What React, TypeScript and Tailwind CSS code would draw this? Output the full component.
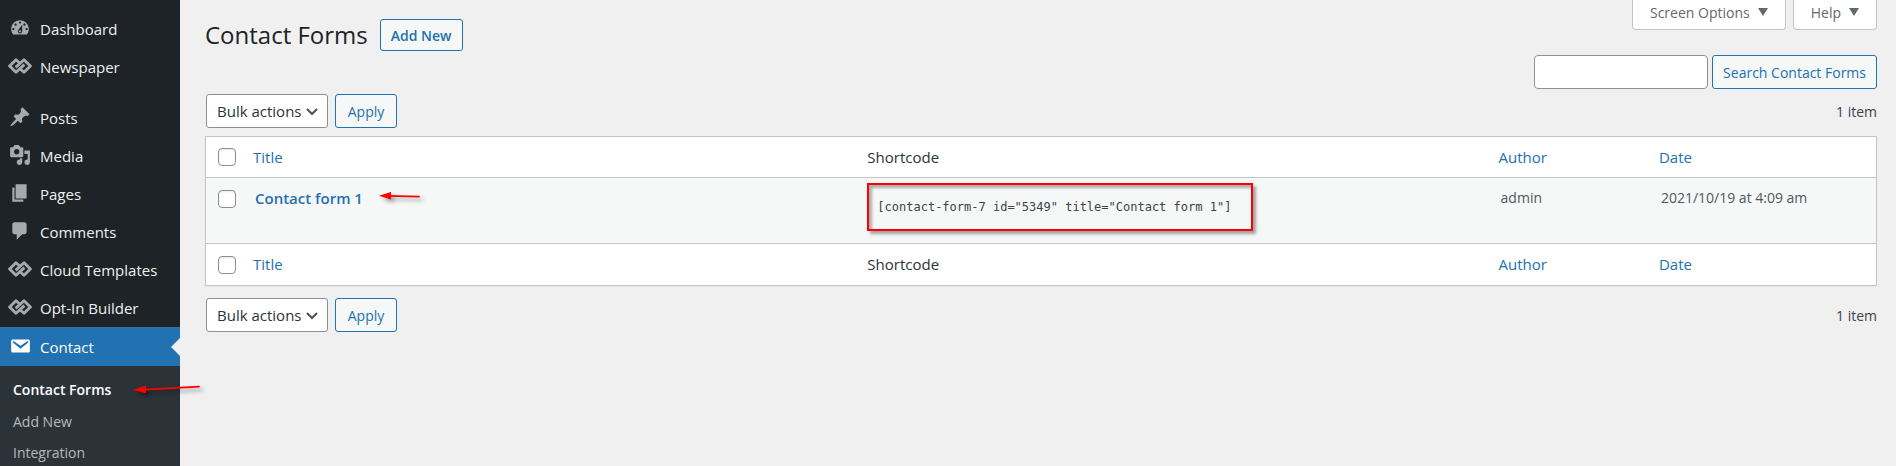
import React from "react";

const icons = {
  dashboard:
    "M3.76 16h12.48c1.1-1.37 1.76-3.11 1.76-5 0-4.42-3.58-8-8-8s-8 3.58-8 8c0 1.89.66 3.63 1.76 5zM10 4c.55 0 1 .45 1 1s-.45 1-1 1-1-.45-1-1 .45-1 1-1zM6 6c.55 0 1 .45 1 1s-.45 1-1 1-1-.45-1-1 .45-1 1-1zm8 0c.55 0 1 .45 1 1s-.45 1-1 1-1-.45-1-1 .45-1 1-1zm-5.37 5.55L12 7v6c0 1.1-.9 2-2 2s-2-.9-2-2c0-.57.24-1.08.63-1.45zM4 10c.55 0 1 .45 1 1s-.45 1-1 1-1-.45-1-1 .45-1 1-1zm12 0c.55 0 1 .45 1 1s-.45 1-1 1-1-.45-1-1 .45-1 1-1zm-5 3c0-.55-.45-1-1-1s-1 .45-1 1 .45 1 1 1 1-.45 1-1z",
  pin: "M10.44 3.02l1.82-1.82 6.36 6.35-1.83 1.82c-1.05-.68-2.48-.57-3.41.36l-.75.75c-.92.93-1.04 2.35-.35 3.41l-1.83 1.82-2.41-2.41-2.8 2.79c-.42.42-3.38 2.71-3.8 2.29s1.86-3.39 2.28-3.81l2.79-2.79L4.1 9.36l1.83-1.82c1.05.69 2.48.57 3.4-.36l.75-.75c.93-.92 1.05-2.35.36-3.41z",
  media:
    "M13 11V4c0-.55-.45-1-1-1h-1.67L9 1H5L3.67 3H2c-.55 0-1 .45-1 1v7c0 .55.45 1 1 1h10c.55 0 1-.45 1-1zM7 4.5c1.38 0 2.5 1.12 2.5 2.5S8.38 9.5 7 9.5 4.5 8.38 4.5 7 5.62 4.5 7 4.5zM14 6h5v10.5c0 1.38-1.12 2.5-2.5 2.5S14 17.88 14 16.5s1.12-2.5 2.5-2.5c.17 0 .34.02.5.05V9h-3V6zm-4 8.05V13h2v3.5c0 1.38-1.12 2.5-2.5 2.5S7 17.88 7 16.5 8.12 14 9.5 14c.17 0 .34.02.5.05z",
  pages: "M6 15V2h10v13H6zm-1 1h8v2H3V5h2v11z",
  comments:
    "M5 2h9c1.1 0 2 .9 2 2v7c0 1.1-.9 2-2 2h-2l-5 5v-5H5c-1.1 0-2-.9-2-2V4c0-1.1.9-2 2-2z",
  mail: "M3.87 4h13.25C18.37 4 19 4.59 19 5.79v8.42c0 1.19-.63 1.79-1.88 1.79H3.87c-1.25 0-1.88-.6-1.88-1.79V5.79c0-1.2.63-1.79 1.88-1.79zm6.62 8.6l6.74-5.53c.24-.2.43-.66.13-1.07-.29-.41-.82-.42-1.17-.17l-5.7 3.86L4.8 5.83c-.35-.25-.88-.24-1.17.17-.3.41-.11.87.13 1.07z",
};

type IconName = keyof typeof icons | "links";

function Icon({ name }: { name: IconName }) {
  if (name === "links") {
    return (
      <svg viewBox="0 0 24 16" className="h-4 w-6" fill="none" stroke="currentColor" strokeWidth="2.9" strokeLinejoin="round" aria-hidden="true">
        <path d="M7.6 9.4 16 1.7 22.4 8 16 14.3 12.6 11.2" />
        <path d="M16.4 6.6 8 14.3 1.6 8 8 1.7 11.4 4.8" />
      </svg>
    );
  }
  return (
    <svg viewBox="0 0 20 20" className="size-[22px]" fill="currentColor" aria-hidden="true">
      <path fillRule="evenodd" d={icons[name]} />
    </svg>
  );
}

function MenuItem({ name, label }: { name: IconName; label: string }) {
  return (
    <li>
      <a href="#" className="flex h-[38px] items-center text-[#f0f0f1]">
        <span className="flex w-10 shrink-0 justify-center pb-0.5 text-[#a7aaad]">
          <Icon name={name} />
        </span>
        {label}
      </a>
    </li>
  );
}

function Sidebar() {
  return (
    <nav aria-label="Main menu" className="w-[180px] shrink-0 bg-[#1d2327] pt-[10px] text-[15px] leading-5 whitespace-nowrap">
      <ul>
        <MenuItem name="dashboard" label="Dashboard" />
        <MenuItem name="links" label="Newspaper" />
      </ul>
      <ul className="mt-[13px]">
        <MenuItem name="pin" label="Posts" />
        <MenuItem name="media" label="Media" />
        <MenuItem name="pages" label="Pages" />
        <MenuItem name="comments" label="Comments" />
        <MenuItem name="links" label="Cloud Templates" />
        <MenuItem name="links" label="Opt-In Builder" />
        <li>
          <a href="#" className="relative flex h-[39px] items-center bg-[#2271b1] text-white">
            <span className="flex w-10 shrink-0 justify-center pb-0.5">
              <Icon name="mail" />
            </span>
            Contact
            <span className="absolute right-0 top-1/2 -translate-y-1/2 border-y-9 border-r-9 border-y-transparent border-r-[#f0f0f1]" />
          </a>
          <ul className="bg-[#2c3338] pt-2 pb-2 text-[14px] text-[#b7b9bb]">
            <li className="relative">
              <a href="#" className="flex h-8 items-center px-[13px] font-semibold text-white">
                Contact Forms
              </a>
              <svg viewBox="0 0 72 16" className="absolute left-[132px] top-2 h-4 w-[72px] drop-shadow-[3px_3px_2px_rgba(0,0,0,0.45)]" aria-hidden="true">
                <path d="M12 7.6 67 4.6" stroke="#f00" strokeWidth="1.8" strokeLinecap="round" />
                <path d="M1 8 14 3.6V11.2Z" fill="#f00" />
              </svg>
            </li>
            <li>
              <a href="#" className="flex h-[31px] items-center px-[13px]">Add New</a>
            </li>
            <li>
              <a href="#" className="flex h-[31px] items-center px-[13px]">Integration</a>
            </li>
          </ul>
        </li>
      </ul>
    </nav>
  );
}

const button = "rounded-[3px] border border-[#2271b1] bg-[#f6f7f7] text-[#2271b1]";

function TableNav() {
  return (
    <div className="flex items-center justify-between pl-px">
      <div className="flex gap-[7px]">
        <div className="relative">
          <select aria-label="Select bulk action" className="h-[34px] w-[122px] appearance-none rounded-[3px] border border-[#8c8f94] bg-white pl-[10px] text-[15px] text-[#2c3338]">
            <option>Bulk actions</option>
          </select>
          <svg viewBox="0 0 12 8" className="pointer-events-none absolute right-[10px] top-[14px] h-2 w-3" fill="none" aria-hidden="true">
            <path d="M1 1 6 6 11 1" stroke="#50575e" strokeWidth="2.2" />
          </svg>
        </div>
        <button type="button" className={`${button} h-[34px] w-[62px] text-[14px]`}>Apply</button>
      </div>
      <span className="text-[14px] text-[#3c434a]">1 item</span>
    </div>
  );
}

function Check({ label }: { label: string }) {
  return (
    <input type="checkbox" aria-label={label} className="block size-[18px] appearance-none rounded-[4px] border border-[#8c8f94] bg-white shadow-[inset_0_1px_2px_rgba(0,0,0,0.1)]" />
  );
}

function HeadingCells() {
  return (
    <>
      <td className="pl-3"><Check label="Select all" /></td>
      <th scope="col" className="font-normal"><a href="#" className="text-[#2271b1]">Title</a></th>
      <th scope="col" className="font-normal">Shortcode</th>
      <th scope="col" className="font-normal"><a href="#" className="text-[#2271b1]">Author</a></th>
      <th scope="col" className="font-normal"><a href="#" className="text-[#2271b1]">Date</a></th>
    </>
  );
}

function FormsTable() {
  return (
    <table className="w-full table-fixed border-separate border-spacing-0 border border-[#c3c4c7] bg-white text-[#2c3338] shadow-[0_1px_1px_rgba(0,0,0,0.04)]">
      <colgroup>
        <col className="w-[47px]" />
        <col />
        <col className="w-[37.8%]" />
        <col className="w-[9.6%]" />
        <col className="w-[13%]" />
      </colgroup>
      <thead>
        <tr className="h-10 text-left text-[15px]"><HeadingCells /></tr>
      </thead>
      <tbody>
        <tr className="h-[67px] bg-[#f6f7f7] text-[14px] text-[#50575e] *:border-y *:border-[#c3c4c7] *:align-top">
          <td className="pt-3 pl-3"><Check label="Select Contact form 1" /></td>
          <td className="pt-[9px] pl-0.5">
            <div className="flex items-center gap-4">
              <a href="#" className="text-[15px] leading-[22px] font-semibold text-[#2271b1]">Contact form 1</a>
              <svg viewBox="0 0 44 12" className="h-3 w-11 overflow-visible drop-shadow-[3px_3px_2px_rgba(0,0,0,0.4)]" aria-hidden="true">
                <path d="M9 3.8 40 4.6" stroke="#f00" strokeWidth="1.8" strokeLinecap="round" />
                <path d="M0 3.8 12 0V7.6Z" fill="#f00" />
              </svg>
            </div>
          </td>
          <td className="pt-[5px]">
            <input
              aria-label="Shortcode"
              readOnly
              defaultValue={'[contact-form-7 id="5349" title="Contact form 1"]'}
              className="block h-12 w-[386px] border-2 border-[#f00] bg-transparent px-2 font-['DejaVu_Sans_Mono','Liberation_Mono',monospace] text-[12px] text-[#3c434a] shadow-[3px_3px_3px_rgba(0,0,0,0.35),inset_3px_3px_3px_rgba(0,0,0,0.3)]"
            />
          </td>
          <td className="pt-[9px] pl-0.5 leading-[22px]">admin</td>
          <td className="pt-[9px] pl-0.5 leading-[22px]">2021/10/19 at 4:09 am</td>
        </tr>
      </tbody>
      <tfoot>
        <tr className="h-[41px] text-left text-[15px]"><HeadingCells /></tr>
      </tfoot>
    </table>
  );
}

function ScreenTab({ label }: { label: string }) {
  return (
    <button type="button" className="flex h-[30px] items-start gap-2 rounded-b-[4px] border border-t-0 border-[#c3c4c7] bg-white px-[17px] pt-[2px] text-[14px] leading-[22px] text-[#646970]">
      {label}
      <svg viewBox="0 0 10 8" className="mt-[6px] h-2 w-[10px]" fill="currentColor" aria-hidden="true">
        <path d="M0 0H10L5 8Z" />
      </svg>
    </button>
  );
}

export default function App() {
  return (
    <div className="flex h-screen overflow-hidden bg-[#f0f0f1] font-['Open_Sans','Noto_Sans',sans-serif]">
      <Sidebar />
      <main className="min-w-0 grow pr-[19px] pl-[25px]">
        <div className="flex items-start justify-between">
          <div className="flex items-center gap-3 pt-[18px]">
            <h1 className="text-[24px] leading-[34px] text-[#1d2327]">Contact Forms</h1>
            <a href="#" className={`${button} flex h-8 items-center px-[10px] text-[14px] font-semibold`}>Add New</a>
          </div>
          <div className="flex gap-[7px]">
            <ScreenTab label="Screen Options" />
            <ScreenTab label="Help" />
          </div>
        </div>
        <form className="mt-[3px] flex justify-end gap-1">
          <input type="search" aria-label="Search Contact Forms" className="h-[34px] w-[174px] rounded-[4px] border border-[#8c8f94] bg-white px-2 text-[14px]" />
          <button type="button" className={`${button} h-[34px] px-[10px] text-[14px]`}>Search Contact Forms</button>
        </form>
        <div className="mt-[5px]">
          <TableNav />
        </div>
        <div className="mt-2 mb-3">
          <FormsTable />
        </div>
        <TableNav />
      </main>
    </div>
  );
}
